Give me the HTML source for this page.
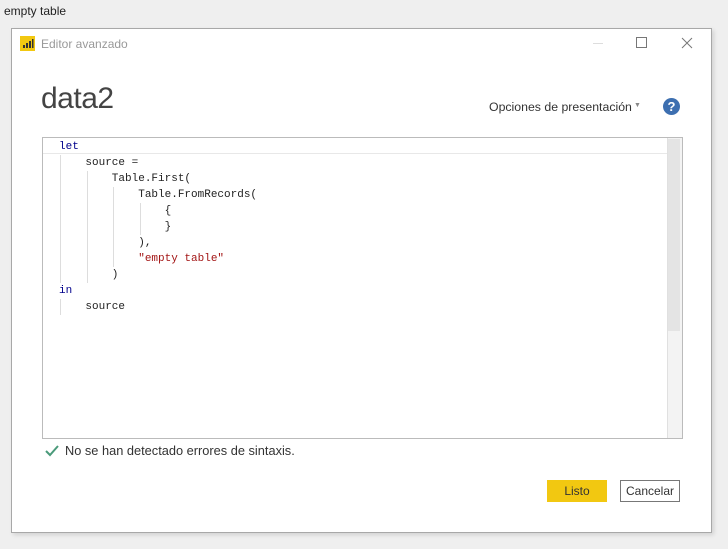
<!DOCTYPE html>
<html><head><style>
body{margin:0;width:728px;height:549px;background:#efefef;font-family:"Liberation Sans",sans-serif;position:relative;overflow:hidden}
.a{position:absolute}
.dlg{left:11px;top:28px;width:699px;height:503px;background:#fff;border:1px solid #a8a8a8;box-shadow:2px 2px 4px rgba(0,0,0,.12)}
.code{font-family:"Liberation Mono",monospace;font-size:11px;line-height:16px;color:#222;white-space:pre}
.g{position:absolute;width:1px;background:#ddd}
</style></head><body>
<div class="a" style="left:4px;top:4px;font-size:12px;color:#222">empty table</div>
<div class="a dlg"></div>
<div class="a" style="left:20px;top:36px;width:15px;height:15px;background:#f2c811"></div>
<svg class="a" style="left:20px;top:36px" width="15" height="15"><rect x="3" y="9" width="2" height="3" fill="#333"/><rect x="6" y="7" width="2" height="5" fill="#333"/><rect x="9" y="5" width="2" height="7" fill="#333"/><rect x="12" y="3" width="1.5" height="9" fill="#333"/></svg>
<div class="a" style="left:41px;top:37px;font-size:12px;color:#999">Editor avanzado</div>
<div class="a" style="left:593px;top:43px;width:10px;height:1px;background:#ddd"></div>
<div class="a" style="left:636px;top:37px;width:9px;height:9px;border:1px solid #777"></div>
<svg class="a" style="left:681px;top:37px" width="12" height="12"><path d="M1 1L11 11M11 1L1 11" stroke="#777" stroke-width="1"/></svg>
<div class="a" style="left:41px;top:82px;font-size:30px;color:#444;letter-spacing:-0.5px">data2</div>
<div class="a" style="left:489px;top:100px;font-size:12.3px;color:#333">Opciones de presentación</div>
<div class="a" style="left:634px;top:102px;font-size:7px;color:#888">▼</div>
<div class="a" style="left:663px;top:98px;width:17px;height:17px;border-radius:50%;background:#3d6fb0;color:#fff;font-size:13px;font-weight:bold;text-align:center;line-height:17px">?</div>
<div class="a" style="left:42px;top:137px;width:639px;height:300px;border:1px solid #bbb;background:#fff"></div>
<div class="a" style="left:43px;top:138px;width:624px;height:15px;border-bottom:1px solid #e8e8e8"></div>
<div class="a" style="left:667px;top:138px;width:14px;height:300px;background:#f3f3f3;border-left:1px solid #e0e0e0"></div>
<div class="a" style="left:668px;top:139px;width:12px;height:192px;background:#e4e4e4"></div>
<div class="g" style="left:60px;top:155px;height:128px"></div>
<div class="g" style="left:87px;top:171px;height:112px"></div>
<div class="g" style="left:113px;top:187px;height:80px"></div>
<div class="g" style="left:140px;top:203px;height:32px"></div>
<div class="g" style="left:60px;top:299px;height:16px"></div>
<div class="a code" style="left:59px;top:139px"><span style="color:#00008b">let</span>
    source =
        Table.First(
            Table.FromRecords(
                {
                }
            ),
            <span style="color:#a31515">"empty table"</span>
        )
<span style="color:#00008b">in</span>
    source</div>
<svg class="a" style="left:44px;top:444px" width="16" height="14"><path d="M2 7L6 11L14 2" stroke="#4a9a7a" stroke-width="2" fill="none"/></svg>
<div class="a" style="left:65px;top:443px;font-size:12.8px;color:#333">No se han detectado errores de sintaxis.</div>
<div class="a" style="left:547px;top:480px;width:60px;height:22px;background:#f2c811;font-size:12px;color:#333;text-align:center;line-height:22px">Listo</div>
<div class="a" style="left:620px;top:480px;width:58px;height:20px;border:1px solid #777;font-size:12px;color:#333;text-align:center;line-height:20px">Cancelar</div>
</body></html>
